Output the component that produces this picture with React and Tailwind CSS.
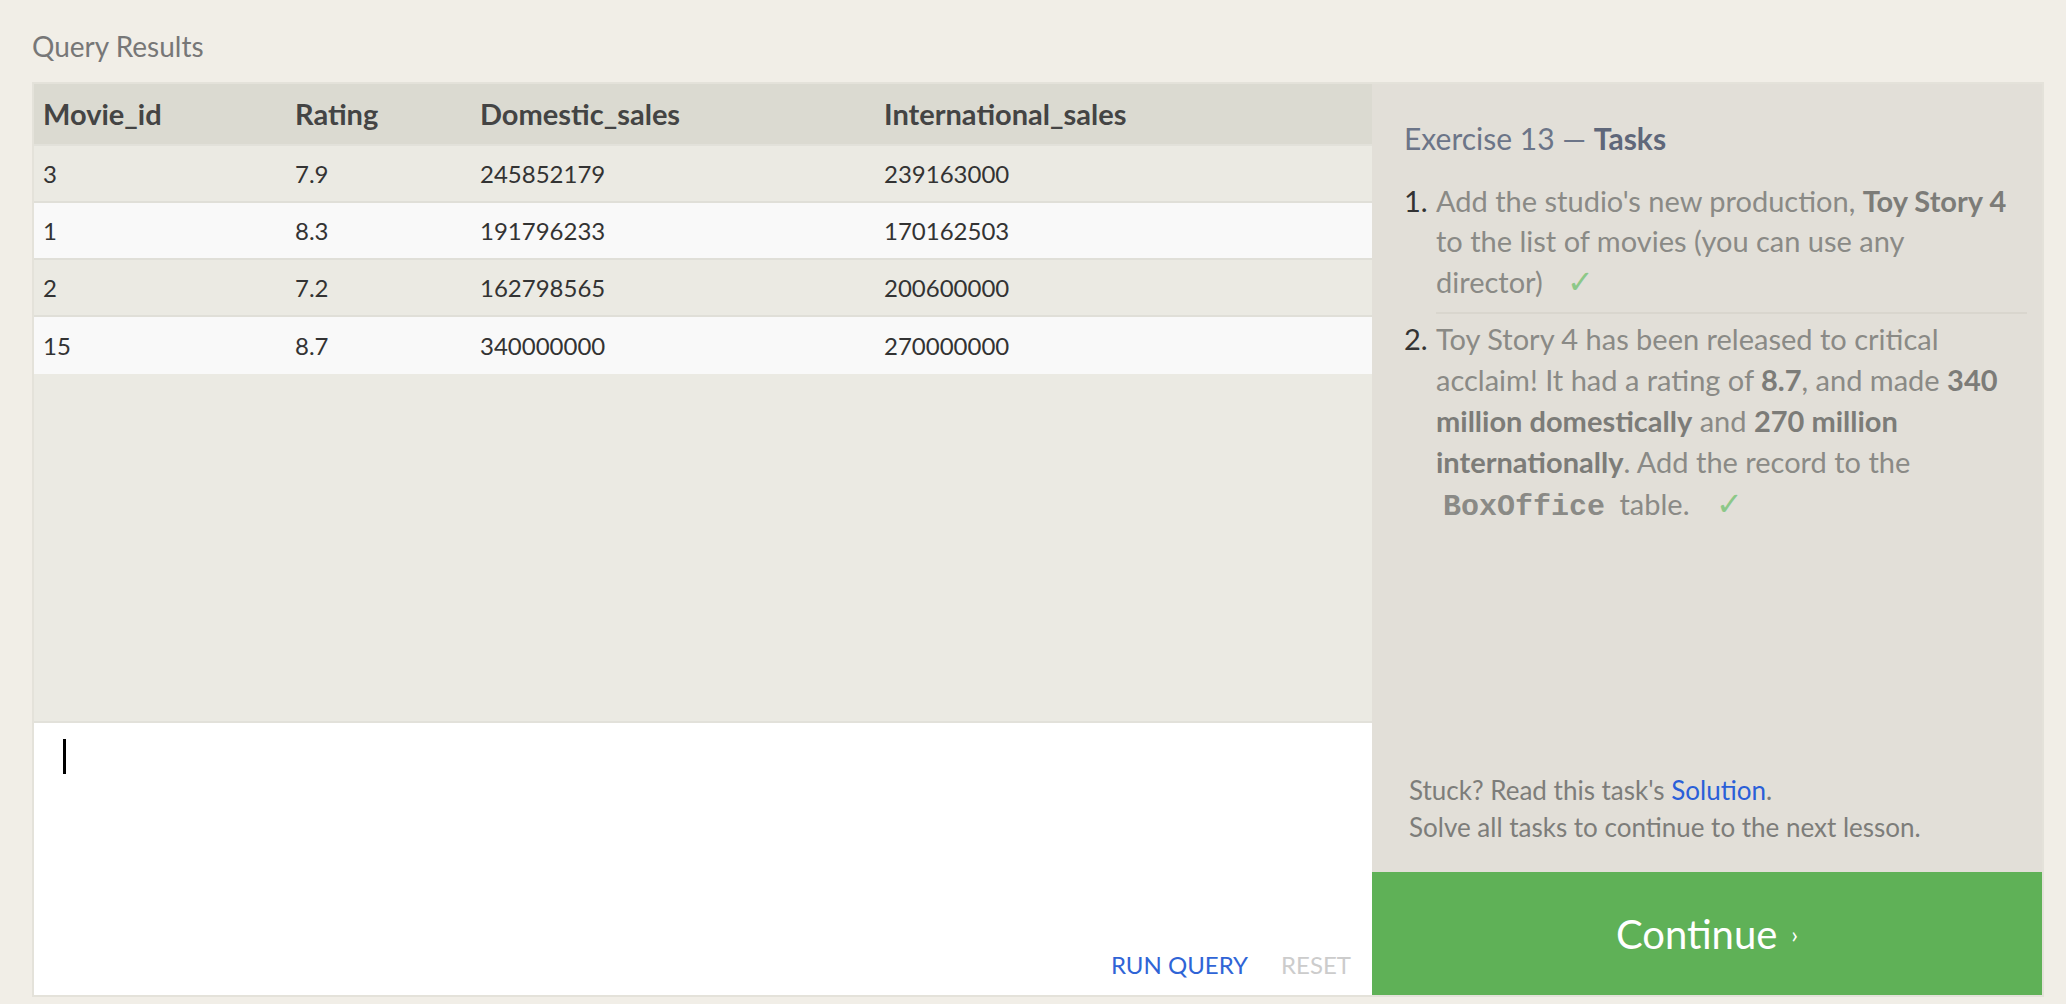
import React from "react";

const rows = [
  ["3", "7.9", "245852179", "239163000"],
  ["1", "8.3", "191796233", "170162503"],
  ["2", "7.2", "162798565", "200600000"],
  ["15", "8.7", "340000000", "270000000"],
];

const cols = "grid grid-cols-[252px_185px_404px_1fr] pl-[9px] items-center";

export default function App() {
  return (
    <div className="w-[2066px] h-[1004px] bg-[#f1eee7] font-['Lato','Liberation_Sans',sans-serif] overflow-hidden">
      <div className="h-[82px] pl-[32px] pt-[10px] flex items-center text-[28px] text-[#777]">
        Query Results
      </div>
      <div className="ml-[32px] w-[2012px] h-[915px] flex border-2 border-[#e4e2da]">
        {/* left */}
        <div className="w-[1338px] flex flex-col">
          <div className={cols + " h-[62px] bg-[#dbdad1] border-b-2 border-[#e2e1da] text-[29px] font-bold text-[#444]"}>
            <div>Movie_id</div>
            <div>Rating</div>
            <div>Domestic_sales</div>
            <div>International_sales</div>
          </div>
          {rows.map((r, i) => (
            <div
              key={i}
              className={
                cols +
                " h-[57px] text-[24px] text-[#333] " +
                (i % 2 === 0 ? "bg-[#ebeae3] " : "bg-[#f9f9f9] ") +
                (i < rows.length - 1 ? "border-b-2 border-[#e0dfd8]" : "")
              }
            >
              {r.map((c, j) => (
                <div key={j}>{c}</div>
              ))}
            </div>
          ))}
          <div className="flex-1 bg-[#ebeae3] border-b-2 border-[#e2e1da]"></div>
          <div className="h-[272px] bg-white flex flex-col">
            <div className="pl-[29px] pt-[16px]">
              <div className="w-[3px] h-[35px] bg-black"></div>
            </div>
            <div className="flex-1"></div>
            <div className="flex justify-end items-center gap-[33px] pr-[21px] pb-[12px] text-[24px]">
              <span className="text-[#2f64d6]">RUN QUERY</span>
              <span className="text-[#cccccc]">RESET</span>
            </div>
          </div>
        </div>
        {/* right */}
        <div className="flex-1 bg-[#e2dfd8] flex flex-col">
          <div className="flex-1 pl-[32px] pt-[36px]">
            <div className="text-[30px] text-[#6c7588] leading-[36px]">
              Exercise 13 — <span className="font-bold text-[#5f677a]">Tasks</span>
            </div>
            <ol className="mt-[25px] text-[29px] text-[#8a8a86]">
              <li className="flex leading-[40px]">
                <span className="w-[32px] shrink-0 text-[#333]">1.</span>
                <div className="w-[591px] pb-[10px] border-b-2 border-[#d9d6ce]">
                  Add the studio's new production, <b className="text-[#7c7c78]">Toy Story 4</b> to the list of movies (you can use any director)
                  <span className="text-[#8cc888] text-[32px] ml-[24px]">✓</span>
                </div>
              </li>
              <li className="flex pt-[4px] leading-[41px]">
                <span className="w-[32px] shrink-0 text-[#333]">2.</span>
                <div className="w-[596px]">
                  Toy Story 4 has been released to critical acclaim! It had a rating of <b className="text-[#7c7c78]">8.7</b>, and made <b className="text-[#7c7c78]">340 million domestically</b> and <b className="text-[#7c7c78]">270 million internationally</b>. Add the record to the{" "}
                  <code className="font-['Liberation_Mono',monospace] text-[30px] font-bold text-[#8a8a86] px-[7px]">BoxOffice</code>{" "}
                  table.
                  <span className="text-[#8cc888] text-[32px] ml-[26px]">✓</span>
                </div>
              </li>
            </ol>
          </div>
          <div className="pl-[37px] pb-[26px] text-[26px] leading-[37px] text-[#7d7d7a]">
            <div>
              Stuck? Read this task's <span className="text-[#2a5fd8]">Solution</span>.
            </div>
            <div>Solve all tasks to continue to the next lesson.</div>
          </div>
          <div className="h-[123px] bg-[#5fb157] flex items-center justify-center text-white text-[40px]">
            Continue <span className="text-[24px] ml-[14px]">›</span>
          </div>
        </div>
      </div>
    </div>
  );
}
